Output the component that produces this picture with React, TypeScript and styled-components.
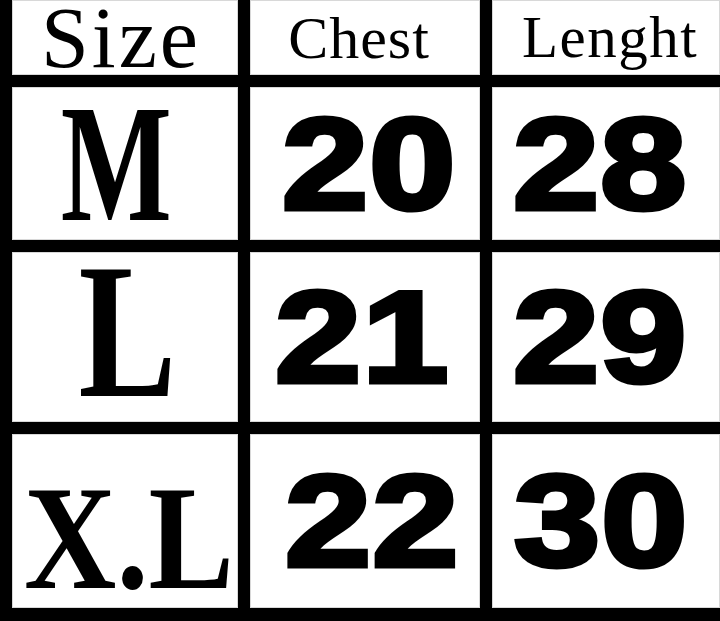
import React from "react";
import styled, { createGlobalStyle } from "styled-components";

const Global = createGlobalStyle`
  html, body { margin: 0; padding: 0; background: #ffffff; }
  body { width: 720px; height: 621px; overflow: hidden; }
`;

const Table = styled.div`
  display: grid;
  grid-template-columns: 226px 230px 228px;
  grid-template-rows: 75px 153px 170px 174px;
  column-gap: 12px;
  row-gap: 12px;
  padding: 0 0 13px 12px;
  width: 720px;
  height: 621px;
  box-sizing: border-box;
  background: #000000;
`;

const Cell = styled.div<{ $padRight?: number }>`
  background: #ffffff;
  display: flex;
  align-items: center;
  justify-content: center;
  min-width: 0;
  padding-right: ${(p) => p.$padRight ?? 0}px;
  box-shadow: inset 0 0 0 1px #d8d8d8;
`;

const Shift = styled.span<{ $dx?: number; $dy?: number; $sx?: number; $sy?: number }>`
  display: inline-block;
  white-space: nowrap;
  transform: translate(${(p) => p.$dx ?? 0}px, ${(p) => p.$dy ?? 0}px)
    scale(${(p) => p.$sx ?? 1}, ${(p) => p.$sy ?? 1});
  transform-origin: center center;
`;

const Header = styled(Shift)<{ $size: number; $ls: number }>`
  font-family: "Liberation Serif", "Times New Roman", serif;
  font-weight: 400;
  font-size: ${(p) => p.$size}px;
  line-height: 0.8;
  letter-spacing: ${(p) => p.$ls}px;
  color: #000;
`;

const SizeLabel = styled(Shift)<{ $size: number }>`
  font-family: "Liberation Serif", "Times New Roman", serif;
  font-weight: 700;
  font-size: ${(p) => p.$size}px;
  line-height: 0.6;
  color: #000;
`;

const Num = styled(Shift)`
  font-family: "Liberation Sans", Arial, sans-serif;
  font-weight: 700;
  font-size: 130px;
  line-height: 0.8;
  color: #000;
  -webkit-text-stroke: 5px #000;
  letter-spacing: 1px;
`;

type Row = {
  size: string;
  fs: number;
  sx: number;
  sy: number;
  dx: number;
  dy: number;
  chest: string;
  cdx: number;
  length: string;
  ldx: number;
};

const rows: Row[] = [
  { size: "M", fs: 168, sx: 0.7, sy: 1, dx: -9, dy: 0, chest: "20", cdx: 4, length: "28", ldx: 0 },
  { size: "L", fs: 193, sx: 0.76, sy: 1, dx: 2, dy: -5, chest: "21", cdx: -3, length: "29", ldx: 0 },
  { size: "X.L", fs: 128, sx: 1, sy: 1.156, dx: 4, dy: 17, chest: "22", cdx: 7, length: "30", ldx: 1 },
];

export default function App() {
  return (
    <>
      <Global />
      <Table>
        <Cell>
          <Header $size={86} $ls={3} $dx={-4} $dy={1}>
            Size
          </Header>
        </Cell>
        <Cell>
          <Header $size={60} $ls={1} $dx={-6}>
            Chest
          </Header>
        </Cell>
        <Cell $padRight={12}>
          <Header $size={59} $ls={1.5} $dx={10}>
            Lenght
          </Header>
        </Cell>
        {rows.map((r) => (
          <React.Fragment key={r.size}>
            <Cell>
              <SizeLabel $size={r.fs} $sx={r.sx} $sy={r.sy} $dx={r.dx} $dy={r.dy}>
                {r.size}
              </SizeLabel>
            </Cell>
            <Cell>
              <Num $sx={1.19} $dx={r.cdx}>
                {r.chest}
              </Num>
            </Cell>
            <Cell $padRight={12}>
              <Num $sx={1.19} $dx={r.ldx}>
                {r.length}
              </Num>
            </Cell>
          </React.Fragment>
        ))}
      </Table>
    </>
  );
}
